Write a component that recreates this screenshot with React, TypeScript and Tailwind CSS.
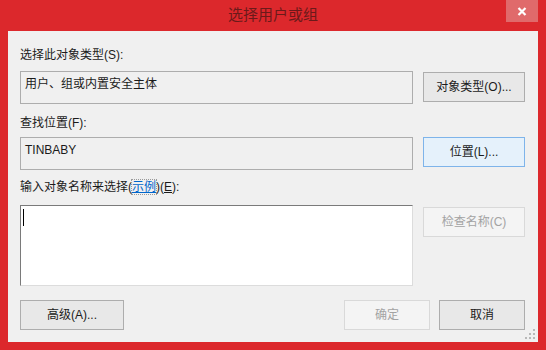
import React from 'react'

/* ─── Shared styles ─────────────────────────────────────────────────────── */

const FONT = {
  fontFamily: '"Liberation Sans", "Noto Sans CJK SC", sans-serif',
}

const btn =
  'flex items-center justify-center h-[30px] border text-[12px] leading-[16px] text-[#1b1b1b]'
const btnNormal = `${btn} bg-[#e8e8e8] border-[#adadad]`
const btnFocus = `${btn} bg-[#e5f1fb] border-[#7eb4ea]`
const btnDisabled = `${btn} bg-[#f4f4f4] border-[#d9d9d9] text-[#a3a3a3]`

const readBox =
  'w-[393px] h-[33px] border border-[#adadad] bg-[#f0f0f0] px-[4px] pt-[4px] text-[12px] leading-[16px] text-[#1b1b1b]'

/* ─── Resize grip ───────────────────────────────────────────────────────── */

function Grip() {
  const dots = [
    [8, 0],
    [8, 4], [4, 4],
    [8, 8], [4, 8], [0, 8],
  ]
  return (
    <svg width="11" height="11" viewBox="0 0 11 11" className="absolute right-[2px] bottom-[2px]">
      {dots.map(([x, y], i) => (
        <rect key={i} x={x} y={y} width="2" height="2" fill="#b8b8b8" />
      ))}
    </svg>
  )
}

/* ─── App ───────────────────────────────────────────────────────────────── */

export default function App() {
  return (
    <div className="w-[546px] h-[350px] bg-[#dc282c] flex flex-col" style={FONT}>
      {/* Title bar */}
      <div className="relative h-[31px] flex items-center justify-center">
        <span className="text-[15px] leading-[20px] text-[#6b1a1a] mt-[-1px]">选择用户或组</span>
        <div className="absolute right-[8px] top-0 w-[32px] h-[22px] bg-[#e06a6b] flex items-center justify-center">
          <svg width="10" height="9" viewBox="0 0 10 9">
            <path d="M1.5 1 L8.5 8 M8.5 1 L1.5 8" stroke="#fff" strokeWidth="2.2" />
          </svg>
        </div>
      </div>

      {/* Body */}
      <div className="relative mx-[8px] w-[530px] h-[311px] bg-[#f0f0f0] pl-[12px] pr-[13px] flex flex-col">
        <div className="mt-[16px] h-[16px] text-[12px] leading-[16px] text-[#1b1b1b]">选择此对象类型(S):</div>
        <div className="mt-[8px] flex gap-[10px]">
          <div className={readBox}>用户、组或内置安全主体</div>
          <button className={`${btnNormal} w-[102px] mt-[1px]`}>对象类型(O)...</button>
        </div>

        <div className="mt-[11px] h-[16px] text-[12px] leading-[16px] text-[#1b1b1b]">查找位置(F):</div>
        <div className="mt-[6px] flex gap-[10px]">
          <div className={readBox}>TINBABY</div>
          <button className={`${btnFocus} w-[102px]`}>位置(L)...</button>
        </div>

        <div className="mt-[9px] h-[16px] text-[12px] leading-[16px] text-[#1b1b1b]">
          输入对象名称来选择(<span className="text-[#0066cc] underline outline outline-1 outline-dotted outline-[#9a9a9a]">示例</span>)(<span className="underline">E</span>):
        </div>
        <div className="mt-[10px] flex gap-[10px]">
          <div className="w-[393px] h-[81px] bg-white border border-t-[#7a7a7a] border-l-[#7a7a7a] border-r-[#dcdcdc] border-b-[#dcdcdc] pl-[2px] pt-[3px]">
            <div className="w-[1px] h-[17px] bg-black" />
          </div>
          <button className={`${btnDisabled} w-[102px] mt-[2px]`}>检查名称(C)</button>
        </div>

        <div className="mt-[14px] flex items-center">
          <button className={`${btnNormal} w-[104px]`}>高级(A)...</button>
          <div className="flex-1" />
          <button className={`${btnDisabled} w-[86px] mr-[9px]`}>确定</button>
          <button className={`${btnNormal} w-[86px]`}>取消</button>
        </div>

        <Grip />
      </div>
    </div>
  )
}
